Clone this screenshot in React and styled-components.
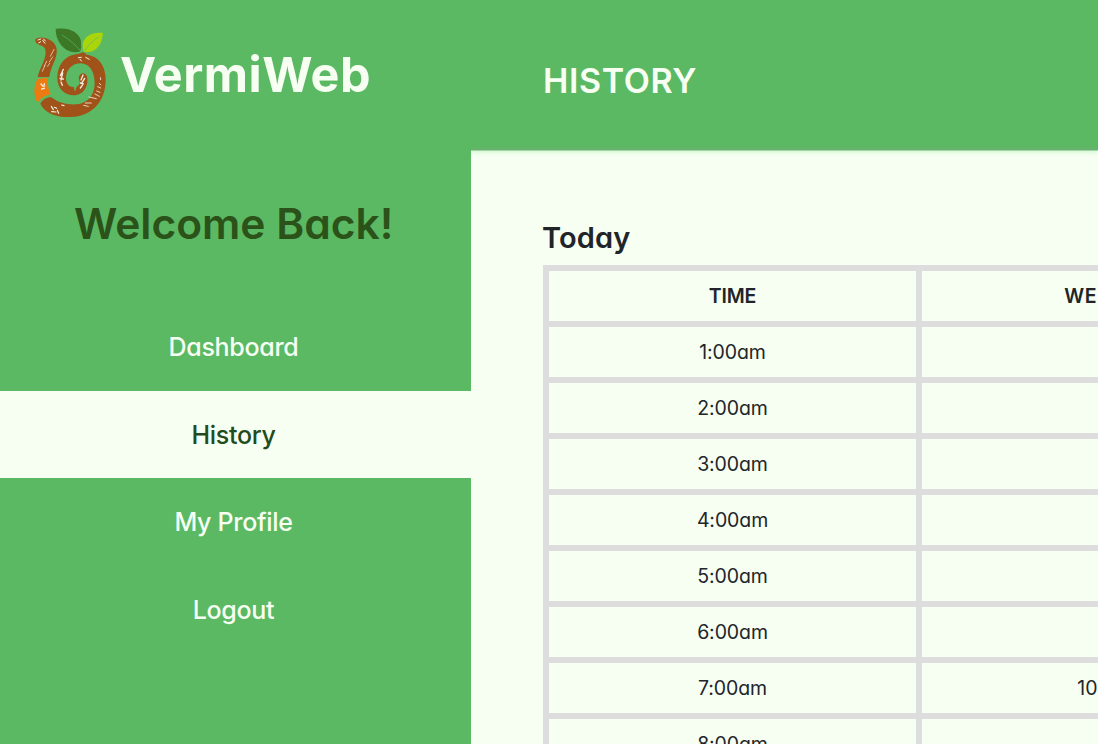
import React from "react";
import styled, { createGlobalStyle } from "styled-components";

const GlobalStyle = createGlobalStyle`
  *, *::before, *::after { box-sizing: border-box; }
  html, body { margin: 0; padding: 0; }
  body {
    height: 100vh;
    overflow: hidden;
    background: #f7fff3;
    color: #212529;
    font-family: Inter, "Liberation Sans", sans-serif;
    font-feature-settings: "cv11" 1;
  }
`;

const Page = styled.div`
  display: grid;
  grid-template-columns: 471px 1fr;
  width: 100vw;
  height: 100vh;
  overflow: hidden;
`;

const Sidebar = styled.aside`
  display: flex;
  flex-direction: column;
  background: #5bb963;
`;

const Brand = styled.div`
  display: flex;
  align-items: center;
  height: 150px;
  padding: 0 0 6px 20px;
`;

const BrandName = styled.span`
  margin: 6px 0 0 -10px;
  font-size: 48.5px;
  font-weight: 650;
  line-height: 60px;
  letter-spacing: 0.5px;
  color: #f7fff3;
`;

const Welcome = styled.h1`
  margin: 47px 0 0;
  padding-left: 74px;
  font-size: 42.5px;
  font-weight: 600;
  line-height: 54px;
  letter-spacing: 0;
  white-space: nowrap;
  color: #2b5219;
`;

const Nav = styled.nav`
  display: flex;
  flex-direction: column;
  margin-top: 52px;
`;

const NavItem = styled.a`
  display: flex;
  align-items: center;
  justify-content: center;
  height: 87.5px;
  padding: 1px 4px 0 0;
  font-size: 25px;
  font-weight: 500;
  letter-spacing: -0.3px;
  color: ${(p) => (p.$active ? "#234b1c" : "#f7fff3")};
  background: ${(p) => (p.$active ? "#f7fff3" : "transparent")};
`;

const Main = styled.main`
  min-width: 0;
  overflow: hidden;
`;

const Header = styled.header`
  display: flex;
  align-items: center;
  height: 150px;
  padding: 12px 0 0 72px;
  background: linear-gradient(#5bb963 146px, #6ab06f 150px);
  box-shadow: 0 1px 0 #a3d5a7, 0 2px 5px #c6f7cb;
`;

const Title = styled.h2`
  margin: 0;
  font-size: 34px;
  font-weight: 600;
  line-height: 42px;
  letter-spacing: 0.6px;
  color: #f7fff3;
`;

const Section = styled.section`
  padding: 70px 0 0 71px;
`;

const Day = styled.h3`
  margin: 0 0 9px;
  font-size: 29px;
  font-weight: 600;
  line-height: 36px;
  letter-spacing: 0.1px;
`;

const Table = styled.div`
  display: grid;
  grid-template-columns: repeat(3, 367px);
  grid-auto-rows: 50px;
  gap: 6px;
  width: max-content;
  margin-left: 1px;
  padding: 6px;
  background: #ddd;
`;

const Cell = styled.div`
  display: flex;
  align-items: center;
  justify-content: center;
  background: #f7fff3;
  font-size: 19.5px;
  font-weight: ${(p) => (p.$head ? 600 : 400)};
  letter-spacing: ${(p) => (p.$wide ? 0.6 : -0.1)}px;
`;

const Logo = () => (
  <svg width="110" height="115" viewBox="0 0 330 345" aria-hidden="true">
    <g fill="#a05219">
      <path d="M45 74C53 66 72 65 88 74C105 82 112 96 110 114C107 139 91 158 88 186L53 186C58 157 84 127 75 101C70 89 57 92 48 83Z" />
      <path d="M61 266C68 254 80 246 94 247C119 266 145 270 172 268C203 264 224 240 224 204C224 167 206 146 183 145C156 145 138 164 138 190C138 208 149 217 161 216L165 230L170 215C180 210 181 202 176 190C178 173 193 169 201 184C207 212 191 241 162 241C132 240 112 220 112 188C112 148 138 119 174 117L190 111L201 119C235 124 257 151 257 194C257 258 217 304 151 306C110 308 73 294 61 266Z" />
    </g>
    <path d="M53 191L84 188C82 208 86 226 93 238C75 242 61 250 53 264C39 239 41 212 53 191Z" fill="#ee7b12" />
    <path d="M107 42C145 36 177 51 183 78Q185 96 181 109C147 121 108 92 107 42Z" fill="#3d7826" />
    <path d="M249 54C216 49 189 66 188 91L190 110C225 117 246 93 249 54Z" fill="#abd50b" />
    <g fill="none" stroke="#5bb963" strokeWidth="2">
      <path d="M126 60Q160 80 186 113" />
      <path d="M236 65Q207 84 190 112" />
    </g>
    <g fill="none" stroke="#f3eee2" strokeWidth="3" strokeLinecap="round">
      <path d="M54 75L62 72M56 84L62 80M68 76L75 85M71 72L76 78" />
      <path d="M102 103L91 124M98 126L88 141M80 139L73 153M75 151L67 169M89 145L83 154" strokeWidth="2" />
      <path d="M63 207L68 213M73 206L72 215M65 222L73 220" strokeWidth="4" />
      <path d="M175 128L184 127M180 133L184 138M197 127L208 133" strokeWidth="3" />
      <path d="M130 163L121 182M128 174L123 195M120 190L130 192M123 201L127 211" strokeWidth="4" />
      <path d="M189 180L183 195M194 190L185 205M181 204L190 207M187 211L181 219" strokeWidth="4" />
      <path d="M241 188L242 194M238 205L243 210M233 215L242 219M230 228L240 232M225 237L238 244M207 246L229 251M196 264L214 264M191 271L205 274" strokeWidth="2.5" />
      <path d="M94 274L100 284M103 277L110 280M95 290L108 291M112 286L116 295M125 270L132 272" strokeWidth="3.5" />
    </g>
  </svg>
);

const links = ["Dashboard", "History", "My Profile", "Logout"];

const readings = [
  ["1:00am", "", ""],
  ["2:00am", "", ""],
  ["3:00am", "", ""],
  ["4:00am", "", ""],
  ["5:00am", "", ""],
  ["6:00am", "", ""],
  ["7:00am", "1000g", ""],
  ["8:00am", "", ""],
];

export default function App() {
  return (
    <Page>
      <GlobalStyle />
      <Sidebar>
        <Brand>
          <Logo />
          <BrandName>VermiWeb</BrandName>
        </Brand>
        <Welcome>Welcome Back!</Welcome>
        <Nav>
          {links.map((label) => (
            <NavItem key={label} $active={label === "History"}>
              {label}
            </NavItem>
          ))}
        </Nav>
      </Sidebar>
      <Main>
        <Header>
          <Title>HISTORY</Title>
        </Header>
        <Section>
          <Day>Today</Day>
          <Table>
            {["TIME", "WEIGHT", ""].map((label, i) => (
              <Cell key={i} $head $wide={label === "WEIGHT"}>
                {label}
              </Cell>
            ))}
            {readings.map((row) =>
              row.map((value, i) => <Cell key={row[0] + i}>{value}</Cell>)
            )}
          </Table>
        </Section>
      </Main>
    </Page>
  );
}
